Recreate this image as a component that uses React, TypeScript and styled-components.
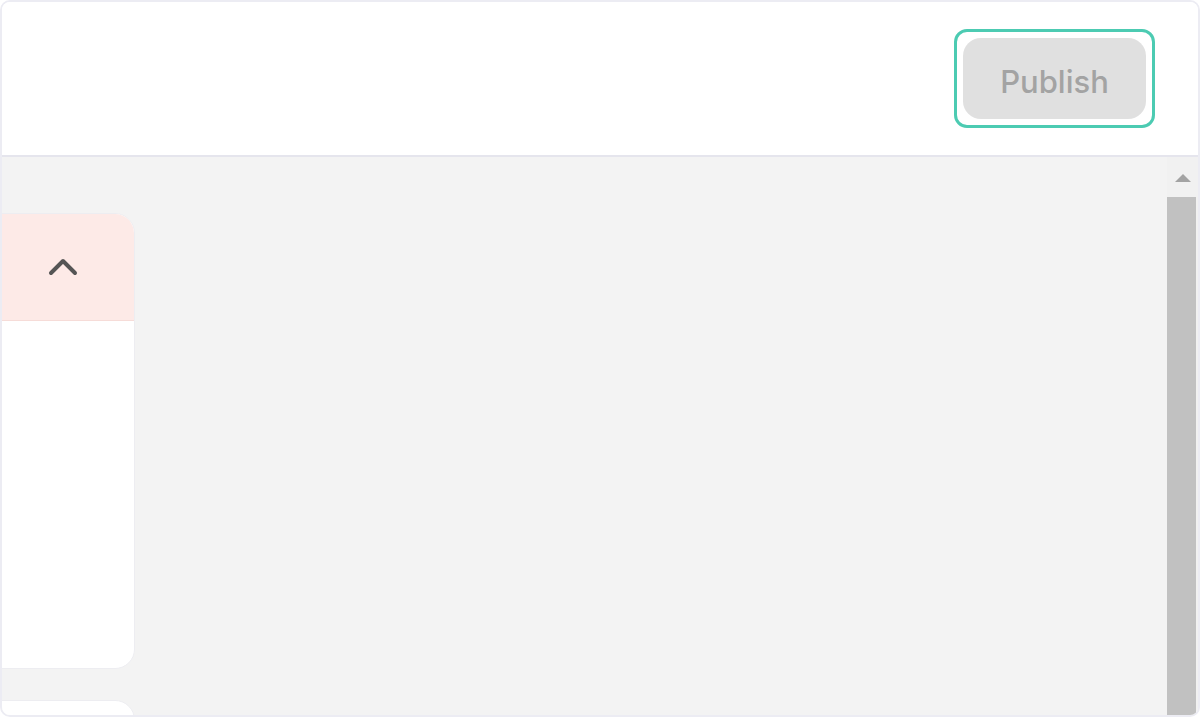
import React from "react";
import styled, { createGlobalStyle } from "styled-components";

const Global = createGlobalStyle`
  html, body { margin: 0; padding: 0; background: #ffffff; }
  body { font-family: Inter, "Noto Sans", Arial, sans-serif; }
  * { box-sizing: border-box; }
`;

const Frame = styled.div`
  width: 1200px;
  height: 717px;
  border: 2px solid #ececf3;
  border-radius: 10px;
  overflow: hidden;
  display: flex;
  flex-direction: column;
  background: #ffffff;
`;

const Header = styled.header`
  height: 155px;
  flex: none;
  display: flex;
  align-items: center;
  justify-content: flex-end;
  padding-right: 43px;
  border-bottom: 2px solid #e5e5ed;
  background: #ffffff;
`;

const FocusRing = styled.div`
  padding: 6px;
  border: 3px solid #4ccbb2;
  border-radius: 13px;
  display: flex;
`;

const PublishButton = styled.button`
  width: 183px;
  height: 81px;
  border: none;
  border-radius: 18px;
  background: #e0e0e0;
  color: #a3a3a3;
  font-family: Inter, "Noto Sans", Arial, sans-serif;
  font-size: 31px;
  font-weight: 500;
  cursor: default;
  padding: 5px 0 0;
`;

const Body = styled.div`
  flex: 1;
  display: flex;
  min-height: 0;
  background: #f3f3f3;
`;

const Content = styled.div`
  flex: 1;
  padding-top: 56px;
  display: flex;
  flex-direction: column;
  gap: 31px;
  overflow: hidden;
`;

const Card = styled.section<{ $height: number }>`
  width: 300px;
  margin-left: -167px;
  height: ${(p) => p.$height}px;
  flex: none;
  background: #ffffff;
  border: 1px solid #ededf1;
  border-radius: 20px;
  overflow: hidden;
  display: flex;
  flex-direction: column;
`;

const CardHeader = styled.div`
  height: 107px;
  flex: none;
  background: #fdeae7;
  border-bottom: 1px solid #f6dcd8;
  display: flex;
  align-items: center;
  justify-content: flex-end;
  padding-right: 56px;
`;

const Scrollbar = styled.div`
  width: 31px;
  flex: none;
  display: flex;
  flex-direction: column;
  align-items: stretch;
  background: #f1f1f1;
  padding-top: 8px;
`;

const ArrowBox = styled.div`
  height: 32px;
  display: flex;
  justify-content: center;
  padding-top: 9px;
`;

const Arrow = styled.div`
  width: 0;
  height: 0;
  border-left: 8px solid transparent;
  border-right: 8px solid transparent;
  border-bottom: 8px solid #a3a3a3;
`;

const Thumb = styled.div`
  flex: 1;
  margin: 0 2px 0 0;
  background: #c1c1c1;
`;

const Chevron = () => (
  <svg width="30" height="22" viewBox="0 0 30 22" fill="none">
    <polyline
      points="3,17 15,5 27,17"
      stroke="#555555"
      strokeWidth="4"
      strokeLinecap="round"
      strokeLinejoin="round"
    />
  </svg>
);

export default function App() {
  return (
    <>
      <Global />
      <Frame>
        <Header>
          <FocusRing>
            <PublishButton>Publish</PublishButton>
          </FocusRing>
        </Header>
        <Body>
          <Content>
            <Card $height={456}>
              <CardHeader>
                <Chevron />
              </CardHeader>
            </Card>
            <Card $height={200} />
          </Content>
          <Scrollbar>
            <ArrowBox>
              <Arrow />
            </ArrowBox>
            <Thumb />
          </Scrollbar>
        </Body>
      </Frame>
    </>
  );
}
